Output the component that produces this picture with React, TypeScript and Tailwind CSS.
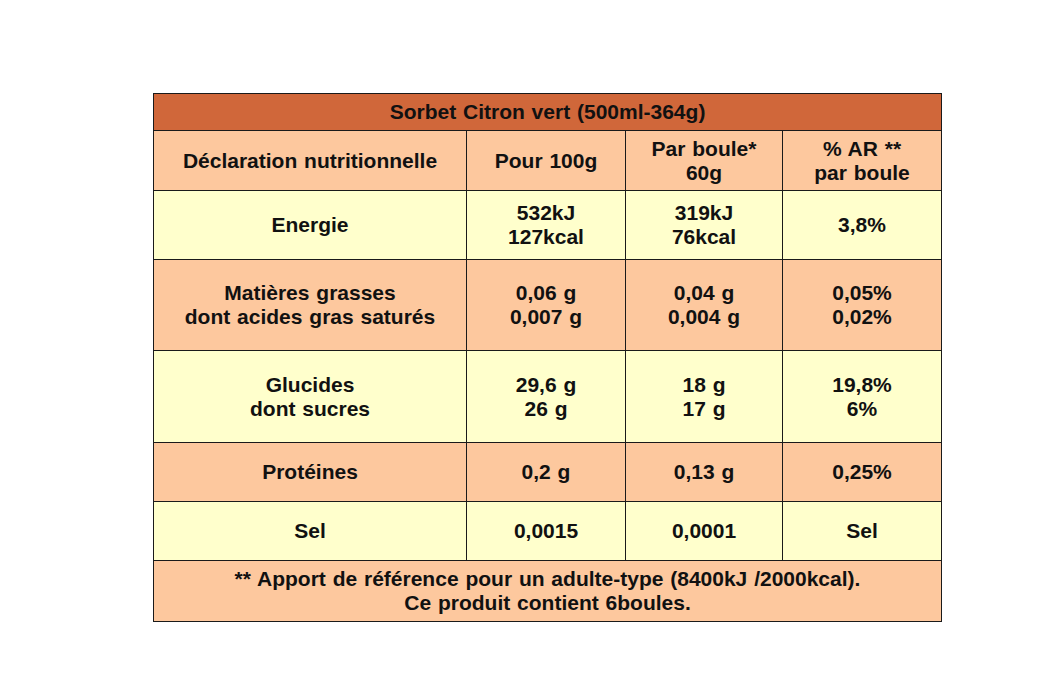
import React from "react";

const rows: { label: string[]; a: string[]; b: string[]; c: string[]; bg: string; h: string }[] = [
  { label: ["Energie"], a: ["532kJ", "127kcal"], b: ["319kJ", "76kcal"], c: ["3,8%"], bg: "bg-[#ffffcc]", h: "h-[69px]" },
  { label: ["Matières grasses", "dont acides gras saturés"], a: ["0,06 g", "0,007 g"], b: ["0,04 g", "0,004 g"], c: ["0,05%", "0,02%"], bg: "bg-[#fdc89e]", h: "h-[91px]" },
  { label: ["Glucides", "dont sucres"], a: ["29,6 g", "26 g"], b: ["18 g", "17 g"], c: ["19,8%", "6%"], bg: "bg-[#ffffcc]", h: "h-[92px]" },
  { label: ["Protéines"], a: ["0,2 g"], b: ["0,13 g"], c: ["0,25%"], bg: "bg-[#fdc89e]", h: "h-[59px]" },
  { label: ["Sel"], a: ["0,0015"], b: ["0,0001"], c: ["Sel"], bg: "bg-[#ffffcc]", h: "h-[59px]" },
];

function Lines({ l }: { l: string[] }) {
  return (
    <>
      {l.map((t, i) => (
        <div key={i}>{t}</div>
      ))}
    </>
  );
}

const cell = "border border-[#1a1a1a] text-center align-middle p-0 whitespace-nowrap";

export default function App() {
  return (
    <div className="w-[1058px] h-[675px] bg-white pt-[93px] pl-[153px]" style={{ fontFamily: '"Liberation Sans", Arial, sans-serif' }}>
      <table className="border-collapse table-fixed w-[788px] font-bold text-[21px] leading-[24px] text-[#111] [word-spacing:1px]">
        <colgroup>
          <col className="w-[313px]" />
          <col className="w-[159px]" />
          <col className="w-[157px]" />
          <col className="w-[159px]" />
        </colgroup>
        <tbody>
          <tr className="h-[37px] bg-[#d0673a]">
            <td colSpan={4} className={cell}>Sorbet Citron vert (500ml-364g)</td>
          </tr>
          <tr className="h-[60px] bg-[#fdc89e]">
            <td className={cell}>Déclaration nutritionnelle</td>
            <td className={cell}>Pour 100g</td>
            <td className={cell}><Lines l={["Par boule*", "60g"]} /></td>
            <td className={cell}><Lines l={["% AR **", "par boule"]} /></td>
          </tr>
          {rows.map((r, i) => (
            <tr key={i} className={`${r.h} ${r.bg}`}>
              <td className={cell}><Lines l={r.label} /></td>
              <td className={cell}><Lines l={r.a} /></td>
              <td className={cell}><Lines l={r.b} /></td>
              <td className={cell}><Lines l={r.c} /></td>
            </tr>
          ))}
          <tr className="h-[61px] bg-[#fdc89e]">
            <td colSpan={4} className={cell}>
              <Lines l={["** Apport de référence pour un adulte-type (8400kJ /2000kcal).", "Ce produit contient 6boules."]} />
            </td>
          </tr>
        </tbody>
      </table>
    </div>
  );
}
